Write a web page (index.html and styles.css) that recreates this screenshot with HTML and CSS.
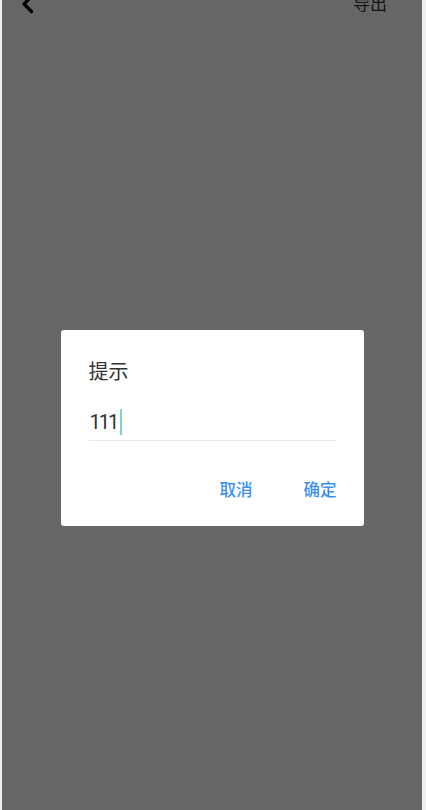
FILE: index.html
```html
<!DOCTYPE html>
<html lang="zh-CN">
<head>
<meta charset="utf-8">
<title>导出</title>
<link rel="stylesheet" href="styles.css">
</head>
<body>
<div class="page">
  <header class="header">
    <span class="back">
      <svg width="14" height="24" viewBox="0 0 14 24"><path d="M10.5 4.5 L3 12 L10.5 19.5" fill="none" stroke="#000" stroke-width="3.2" stroke-linecap="round" stroke-linejoin="round"/></svg>
    </span>
    <span class="export">导出</span>
  </header>
  <div class="mask">
    <div class="dialog">
      <div class="title">提示</div>
      <div class="field"><span class="value">111</span><span class="caret"></span></div>
      <div class="actions">
        <span class="btn">取消</span>
        <span class="btn">确定</span>
      </div>
    </div>
  </div>
</div>
</body>
</html>
```
FILE: styles.css
```css
html, body {
  margin: 0;
  padding: 0;
}
body {
  background: #efefef;
  font-family: "Roboto", "Noto Sans CJK SC", sans-serif;
}
.page {
  position: relative;
  margin-left: 2px;
  width: 420px;
  height: 810px;
  background: #fff;
  overflow: hidden;
}
.header {
  display: flex;
  align-items: center;
  justify-content: space-between;
  height: 44px;
  margin-top: -18px;
  padding: 0 35px 0 19px;
}
.back {
  display: flex;
}
.export {
  font-size: 17px;
  line-height: 24px;
  color: #333;
}
.mask {
  position: absolute;
  inset: 0;
  background: rgba(0, 0, 0, 0.6);
  display: flex;
  justify-content: center;
  align-items: flex-start;
  padding-top: 330px;
}
.dialog {
  box-sizing: border-box;
  width: 303px;
  height: 196px;
  background: #fff;
  border-radius: 3px;
  padding: 30px 27px 0 28px;
}
.title {
  font-size: 20px;
  line-height: 24px;
  color: #333;
}
.field {
  margin-top: 20px;
  height: 36px;
  border-bottom: 1px solid #e8e8e8;
  display: flex;
  align-items: center;
  padding-left: 1px;
}
.value {
  font-size: 20px;
  letter-spacing: -2px;
  color: #333;
}
.caret {
  width: 2px;
  height: 26px;
  background: #80d4c2;
  margin-left: 3px;
}
.actions {
  display: flex;
  justify-content: flex-end;
  gap: 51px;
  margin-top: 39px;
}
.btn {
  font-size: 16.5px;
  font-weight: 500;
  line-height: 22px;
  color: #3a8ef0;
}
```
